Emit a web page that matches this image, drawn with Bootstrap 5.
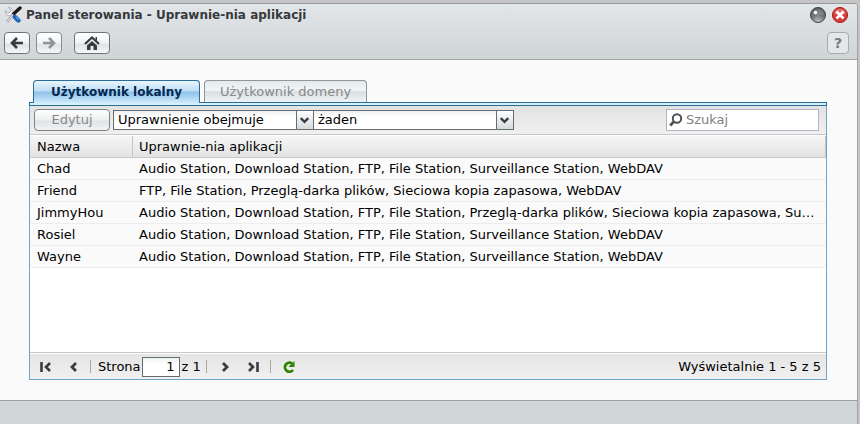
<!DOCTYPE html>
<html lang="pl">
<head>
<meta charset="utf-8">
<meta name="viewport" content="width=device-width, initial-scale=1">
<title>Panel sterowania - Uprawnie-nia aplikacji</title>
<link href="https://cdn.jsdelivr.net/npm/bootstrap@5.3.0/dist/css/bootstrap.min.css" rel="stylesheet">
<style>
body{font:13px/16px "DejaVu Sans",Verdana,sans-serif;color:#000;background:#c4c4c4;padding:3px 2px 0 0}
.win{min-height:calc(100vh - 3px);background:#fafafa;border-top:1px solid #9b9b9b;border-right:1px solid #a2a2a2;border-top-right-radius:4px}
.win-head{background:linear-gradient(#e2e6e9,#cfd4d7);border-bottom:1px solid #a5a5a5;padding:0 8px 5px 4px;border-top-right-radius:3px}
.win-title{font-size:12px;line-height:22px;font-weight:bold;color:#36393d;margin:0}
.win-foot{background:#d1d6d9;border-top:1px solid #a0a0a0;height:24px}
.nav-row{padding-top:6px}
.tool-btn{height:22px;width:26px;padding:0;border:1px solid #6d7377;border-radius:4px;background:linear-gradient(#fff,#f1f3f4 50%,#dfe3e5 55%,#f4f6f7);display:flex;align-items:center;justify-content:center}
.tool-btn.wide{width:36px;margin-left:12px}
.tool-btn.help{width:22px;border-color:#a6abae;background:#e3e7ea;font-weight:bold;font-size:14px;color:#74797c}
.tool-btn:disabled{border-color:#858b8f;margin-left:6px}
.round-btn{width:18px;height:18px;padding:0;border:0;background:none;display:flex}
.content{padding:20px 30px 20px 29px}
.tab-row{padding:0 4px;gap:4px}
.tab-btn{height:22px;border:1px solid #8f979c;border-bottom:0;border-radius:4px 4px 0 0;color:#888;background:linear-gradient(#e4e9ec,#f0f5f7 45%,#d9dfe2 50%,#eef3f6);padding:0 15px;line-height:20px}
.tab-btn.active{height:23px;margin-bottom:-1px;position:relative;border-color:#2b6c99;color:#022750;font-size:12px;font-weight:bold;padding:0 17px;background:linear-gradient(#e9f5fd,#bfddf4 45%,#8fc1ea 50%,#cfeafa)}
.tab-strip{height:4px;background:#d5effb;border:1px solid #2b6c99}
.panel{border:1px solid #6fa5ca;border-top:0;background:#fff}
.bar{background:linear-gradient(#e2e2e2,#f0f0f0);height:29px;padding:0 7px 0 4px;border-bottom:1px solid #c8c8c8}
.edit-btn{height:22px;width:76px;padding:0;margin-right:3px;line-height:18px;border:1px solid #7d8286;border-radius:4px;color:#888;background:linear-gradient(#fff,#edf0f1 50%,#dfe3e5 55%,#f1f3f4)}
.pick{position:relative;width:201px}
.pick select{display:block;appearance:none;width:100%;height:20px;border:1px solid #666d71;border-radius:0;background:linear-gradient(#eef1f1,#fff 6px);padding:0 20px 0 4px;color:#000;line-height:16px}
.pick svg{position:absolute;right:1px;top:1px;width:17px;height:18px;border-left:1px solid #666d71;background:linear-gradient(#fff,#e6eaec 55%,#d5dadd);pointer-events:none}
.pick+.pick{margin-left:-1px}
.find{width:153px;height:22px;border:1px solid #b5b3c6;background:#fff;padding-left:2px}
.find input{border:0;outline:0;width:100%;min-width:0;padding:0 3px;background:none}
.find input::placeholder{color:#808080;opacity:1}
.grid-table{table-layout:fixed;width:100%;border-collapse:separate;border-spacing:0;margin-top:1px}
.grid-table th{font-weight:normal;height:22px;padding:0 7px;background:linear-gradient(#f6f6f6,#e3e3e3);border-bottom:1px solid #c8c8c8;border-right:1px solid #c4c4c4}
.grid-table td{height:22px;padding:0 7px;background:#fafafa;border-bottom:1px solid #ededed;overflow:hidden;white-space:nowrap;text-overflow:ellipsis}
.grid-table th+th,.grid-table td+td{padding-left:6px}
.c-name{width:103px}
.grid-area{min-height:200px}
.pager{background:linear-gradient(#e4e4e4,#f0f0f0);border-top:1px solid #c8c8c8;box-shadow:inset 0 1px #fff;height:27px;padding:1px 5px 0 7px}
.pg-btn{width:16px;height:16px;padding:0;border:0;background:none;display:flex;flex:none}
.pg-btn+.pg-btn{margin-left:13px}
.pg-sep{width:1px;height:13px;margin-left:8px;background:#aca899}
.pg-sep+.pg-btn{margin-left:10px}
.pg-sep+label{margin-left:7px}
.pg-of{margin:0 -3px 0 2px}
.pg-num{width:38px;height:20px;padding:0 4px;margin-left:1px;text-align:right;border:1px solid #666d71;background:linear-gradient(#eef1f1,#fff 6px)}
</style>
</head>
<body>
<div class="win d-flex flex-column">
  <header class="win-head">
    <div class="d-flex align-items-center">
      <svg width="18" height="18" viewBox="0 0 18 18" aria-hidden="true">
        <path d="M4.500 1.500 7 4 6 6.500 3.500 7 1.500 4.500C1 8 3.500 10.500 6.500 9.500l6 6.500 2-2-5.500-6C9.800 4.500 8 1.200 4.500 1.500Z" fill="#f6f6f6" stroke="#a3a7aa" stroke-width=".9"/>
        <path d="M16 2 9.500 8" stroke="#1c1c1c" stroke-width="3.400" stroke-linecap="round"/>
        <path d="M9 8.500 3 16" stroke="#8d9194" stroke-width="2.200"/><path d="M9 8.500 3 16" stroke="#fff" stroke-width="1"/>
        <path d="m11 11 3.500 3.500" stroke="#1a62b8" stroke-width="4.400" stroke-linecap="round"/><path d="m12 11 3 3" stroke="#5fa2e4" stroke-width="1.300"/>
      </svg>
      <h1 class="win-title ms-1">Panel sterowania - Uprawnie-nia aplikacji</h1>
      <div class="d-flex gap-1 ms-auto">
        <button class="round-btn" aria-label="Minimalizuj"><svg width="18" height="18" viewBox="0 0 18 18"><defs><radialGradient id="gg" cx=".5" cy=".9" r=".8"><stop offset="0" stop-color="#bbb"/><stop offset=".5" stop-color="#777b7d"/><stop offset="1" stop-color="#4c5154"/></radialGradient></defs><circle cx="9" cy="9" r="8.500" fill="#eee"/><circle cx="9" cy="9" r="7.600" fill="url(#gg)" stroke="#484d50"/><path d="M3 8.500a6 6 0 0 1 12 0Z" fill="#fff" opacity=".18"/><circle cx="6.500" cy="6.500" r="1.700" fill="#fff"/></svg></button>
        <button class="round-btn" aria-label="Zamknij"><svg width="18" height="18" viewBox="0 0 18 18"><circle cx="9" cy="9" r="8.500" fill="#eee"/><circle cx="9" cy="9" r="7.600" fill="#cf3a36" stroke="#b1201f"/><path d="M3 8.500a6 6 0 0 1 12 0Z" fill="#fff" opacity=".25"/><path d="m5.500 5.500 7 7m0-7-7 7" stroke="#fff" stroke-width="2.800"/></svg></button>
      </div>
    </div>
    <nav class="nav-row d-flex" aria-label="Nawigacja">
      <button class="tool-btn" aria-label="Wstecz"><svg width="14" height="12" viewBox="0 0 14 12"><path d="M13 6H3M7 1 2 6l5 5" fill="none" stroke="#373c40" stroke-width="2.600"/></svg></button>
      <button class="tool-btn" disabled aria-label="Dalej"><svg width="14" height="12" viewBox="0 0 14 12"><path d="M1 6h10M7 1l5 5-5 5" fill="none" stroke="#8f9498" stroke-width="2.600"/></svg></button>
      <button class="tool-btn wide" aria-label="Strona główna"><svg width="16" height="14" viewBox="0 0 16 14"><path d="M1 8 8 1.500 15 8" fill="none" stroke="#373c40" stroke-width="2.200"/><path d="M3 9.500 8 5l5 4.500V14H9.500v-4h-3v4H3ZM11.500 1H13v4l-1.500-1.500Z" fill="#373c40"/></svg></button>
      <button class="tool-btn help ms-auto" aria-label="Pomoc">?</button>
    </nav>
  </header>
  <main class="content flex-grow-1 d-flex flex-column">
    <div class="tab-row d-flex align-items-end" role="tablist">
      <button class="tab-btn active" role="tab" aria-selected="true">Użytkownik lokalny</button>
      <button class="tab-btn" role="tab" aria-selected="false">Użytkownik domeny</button>
    </div>
    <div class="tab-strip"></div>
    <section class="panel flex-grow-1 d-flex flex-column">
      <div class="bar d-flex align-items-center">
        <button class="edit-btn" disabled>Edytuj</button>
        <div class="pick"><select aria-label="Warunek"><option>Uprawnienie obejmuje</option></select><svg viewBox="0 0 17 18" aria-hidden="true"><path d="m4 7 4 4 4-4" fill="none" stroke="#373c40" stroke-width="2.400"/></svg></div>
        <div class="pick"><select aria-label="Aplikacja"><option>żaden</option></select><svg viewBox="0 0 17 18" aria-hidden="true"><path d="m4 7 4 4 4-4" fill="none" stroke="#373c40" stroke-width="2.400"/></svg></div>
        <label class="find d-flex align-items-center ms-auto"><svg class="flex-shrink-0" width="14" height="14" viewBox="0 0 14 14" aria-hidden="true"><circle cx="8" cy="5.500" r="4.200" fill="#fff" stroke="#4c5154" stroke-width="2"/><path d="M5 8.500 1.200 12.500" stroke="#4c5154" stroke-width="2.600"/></svg><input type="text" placeholder="Szukaj" aria-label="Szukaj"></label>
      </div>
      <div class="grid-area flex-grow-1">
        <table class="grid-table">
          <thead><tr><th class="c-name" scope="col">Nazwa</th><th scope="col">Uprawnie-nia aplikacji</th></tr></thead>
          <tbody>
            <tr><td>Chad</td><td>Audio Station, Download Station, FTP, File Station, Surveillance Station, WebDAV</td></tr>
            <tr><td>Friend</td><td>FTP, File Station, Przeglą-darka plików, Sieciowa kopia zapasowa, WebDAV</td></tr>
            <tr><td>JimmyHou</td><td>Audio Station, Download Station, FTP, File Station, Przeglą-darka plików, Sieciowa kopia zapasowa, Surveillance Station, WebDAV</td></tr>
            <tr><td>Rosiel</td><td>Audio Station, Download Station, FTP, File Station, Surveillance Station, WebDAV</td></tr>
            <tr><td>Wayne</td><td>Audio Station, Download Station, FTP, File Station, Surveillance Station, WebDAV</td></tr>
          </tbody>
        </table>
      </div>
      <footer class="pager d-flex align-items-center">
        <button class="pg-btn" aria-label="Pierwsza strona"><svg width="16" height="16" viewBox="0 0 16 16"><path d="M4.500 3v10M13 4 9 8l4 4" fill="none" stroke="#373c40" stroke-width="2.600"/></svg></button>
        <button class="pg-btn" aria-label="Poprzednia strona"><svg width="16" height="16" viewBox="0 0 16 16"><path d="M10 4 6 8l4 4" fill="none" stroke="#373c40" stroke-width="2.800"/></svg></button>
        <span class="pg-sep"></span>
        <label for="page">Strona</label>
        <input class="pg-num" id="page" type="text" value="1">
        <span class="pg-of">z 1</span>
        <span class="pg-sep"></span>
        <button class="pg-btn" aria-label="Następna strona"><svg width="16" height="16" viewBox="0 0 16 16"><path d="m6 4 4 4-4 4" fill="none" stroke="#373c40" stroke-width="2.800"/></svg></button>
        <button class="pg-btn" aria-label="Ostatnia strona"><svg width="16" height="16" viewBox="0 0 16 16"><path d="M11.500 3v10M3 4l4 4-4 4" fill="none" stroke="#373c40" stroke-width="2.600"/></svg></button>
        <span class="pg-sep"></span>
        <button class="pg-btn" aria-label="Odśwież"><svg width="16" height="16" viewBox="0 0 16 16"><path d="M12 11A4.500 4.500 0 1 1 11 4.500" fill="none" stroke="#2c8500" stroke-width="2.800"/><path d="M13.500 2v6H7.500Z" fill="#2c8500"/></svg></button>
        <span class="ms-auto">Wyświetalnie 1 - 5 z 5</span>
      </footer>
    </section>
  </main>
  <div class="win-foot"></div>
</div>
<script src="https://cdn.jsdelivr.net/npm/bootstrap@5.3.0/dist/js/bootstrap.bundle.min.js"></script>
</body>
</html>
